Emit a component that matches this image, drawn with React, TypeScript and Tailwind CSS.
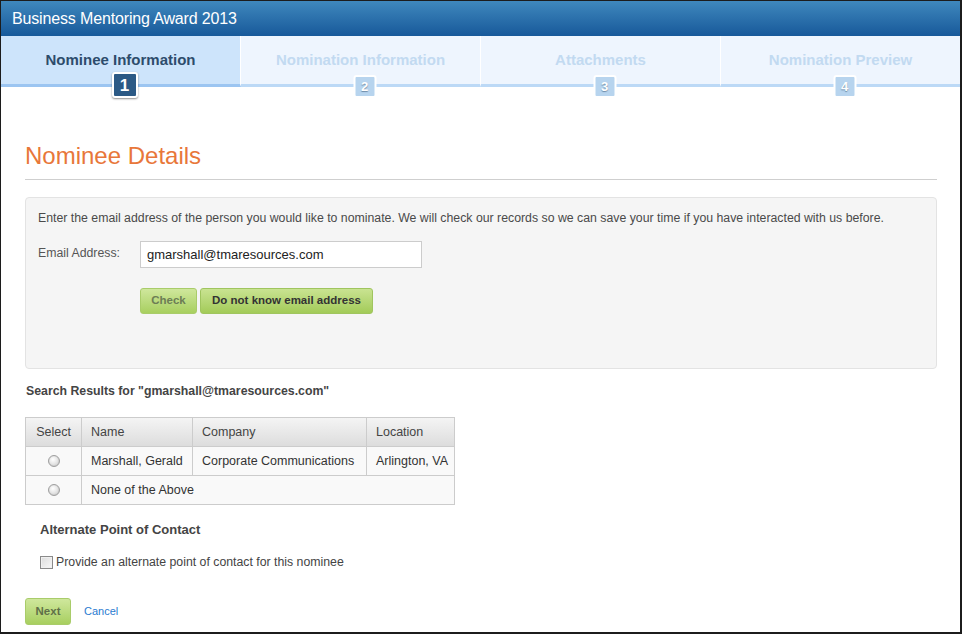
import React from "react";

const tabs = [
  { label: "Nominee Information", n: "1", active: true },
  { label: "Nomination Information", n: "2", active: false },
  { label: "Attachments", n: "3", active: false },
  { label: "Nomination Preview", n: "4", active: false },
];

function Radio() {
  return (
    <span className="inline-block w-[12px] h-[12px] rounded-full border border-[#a0a0a0] bg-[radial-gradient(circle_at_40%_35%,#ffffff_0%,#e8e8e8_45%,#c8c8c8_100%)] shadow-[inset_0_0_1px_rgba(0,0,0,0.2)]" />
  );
}

export default function App() {
  return (
    <div
      className="w-[962px] h-[634px] bg-white border-l border-t border-r-2 border-b-2 border-[#1c1c1c] overflow-hidden flex flex-col"
      style={{ fontFamily: '"Liberation Sans", Arial, sans-serif' }}
    >
      {/* Header */}
      <div className="h-[35px] shrink-0 bg-gradient-to-b from-[#3f88bd] to-[#17599a] flex items-center pl-[11px]">
        <span className="text-white text-[16px] tracking-[-0.15px]">Business Mentoring Award 2013</span>
      </div>

      {/* Tabs */}
      <div className="flex h-[51px] shrink-0">
        {tabs.map((t, i) => (
          <div
            key={t.n}
            className={`relative flex-1 flex justify-center pt-[15px] border-b-[3px] ${
              i < 3 ? "border-r border-r-white" : ""
            } ${t.active ? "bg-[#cde4fb] border-b-[#9cc5f1]" : "bg-[#eef5fe] border-b-[#bcd9f6]"}`}
          >
            <span
              className={`text-[15px] leading-[18px] font-bold ${
                t.active ? "text-[#2d4c6c]" : "text-[#c2daf1]"
              }`}
            >
              {t.label}
            </span>
            {t.active ? (
              <span className="absolute left-1/2 -translate-x-1/2 ml-[4px] bottom-[-14px] w-[26px] h-[26px] rounded-[3px] border-2 border-white bg-[#2b5985] shadow-[0_1px_2px_rgba(0,0,0,0.45)] flex items-center justify-center text-white font-bold text-[17px] leading-none z-10">
                {t.n}
              </span>
            ) : (
              <span className="absolute left-1/2 -translate-x-1/2 ml-[4px] bottom-[-14px] w-[23px] h-[23px] rounded-[3px] border-2 border-white bg-[#b7d4ee] flex items-center justify-center text-white font-bold text-[13px] leading-none z-10 [text-shadow:0_1px_1px_rgba(60,90,120,0.6)]">
                {t.n}
              </span>
            )}
          </div>
        ))}
      </div>

      {/* Content */}
      <div className="pl-[24px] pr-[23px] pt-[55px]">
        <h1 className="text-[24px] leading-[28px] text-[#e8773a] pb-[9px] border-b border-[#cfcfcf] font-normal">
          Nominee Details
        </h1>

        <div className="mt-[17px] bg-[#f5f5f5] border border-[#e3e3e3] rounded-[4px] pt-[12px] px-[12px] pb-[54px]">
          <p className="text-[12.3px] leading-[16px] text-[#4a4a4a]">
            Enter the email address of the person you would like to nominate. We will check our records so we can save your time if you have interacted with us before.
          </p>
          <div className="flex mt-[15px]">
            <label className="w-[102px] text-[12.3px] leading-[16px] text-[#555] pt-[4px]">Email Address:</label>
            <div className="w-[282px] h-[27px] bg-white border border-[#cccccc] flex items-center pl-[6px] text-[13px] text-[#222]">
              gmarshall@tmaresources.com
            </div>
          </div>
          <div className="flex ml-[102px] mt-[20px] gap-[3px]">
            <button className="w-[57px] h-[26px] rounded-[3px] border border-[#a9cc6a] bg-gradient-to-b from-[#cfe79c] to-[#a8cf5f] text-[11.5px] font-bold text-[#6c7d55]">
              Check
            </button>
            <button className="w-[173px] h-[26px] rounded-[3px] border border-[#a0c55f] bg-gradient-to-b from-[#c9e391] to-[#a3cb58] text-[11.5px] font-bold text-[#333]">
              Do not know email address
            </button>
          </div>
        </div>

        <div className="mt-[14px] text-[12.3px] leading-[16px] font-bold text-[#444] pl-[1px]">
          Search Results for "gmarshall@tmaresources.com"
        </div>

        <table className="mt-[18px] border-collapse text-[12.5px] text-[#333]">
          <thead>
            <tr className="h-[29px] bg-gradient-to-b from-[#f4f4f4] to-[#dcdcdc] text-[#444]">
              <th className="w-[56px] border border-[#cccccc] font-normal text-center">Select</th>
              <th className="w-[111px] border border-[#cccccc] font-normal text-left pl-[9px]">Name</th>
              <th className="w-[174px] border border-[#cccccc] font-normal text-left pl-[9px]">Company</th>
              <th className="w-[88px] border border-[#cccccc] font-normal text-left pl-[9px]">Location</th>
            </tr>
          </thead>
          <tbody>
            <tr className="h-[29px] bg-[#f9f9f9]">
              <td className="border border-[#cccccc] text-center pt-[5px]"><Radio /></td>
              <td className="border border-[#cccccc] pl-[9px]">Marshall, Gerald</td>
              <td className="border border-[#cccccc] pl-[9px]">Corporate Communications</td>
              <td className="border border-[#cccccc] pl-[9px]">Arlington, VA</td>
            </tr>
            <tr className="h-[29px] bg-[#f9f9f9]">
              <td className="border border-[#cccccc] text-center pt-[5px]"><Radio /></td>
              <td colSpan={3} className="border border-[#cccccc] pl-[9px]">None of the Above</td>
            </tr>
          </tbody>
        </table>

        <div className="mt-[16px] ml-[15px] text-[13px] leading-[18px] font-bold text-[#444]">
          Alternate Point of Contact
        </div>

        <div className="mt-[15px] ml-[15px] flex items-center gap-[3px]">
          <span className="w-[13px] h-[13px] border border-[#8a8a8a] bg-gradient-to-br from-[#dcdcdc] to-[#f8f8f8] shadow-[inset_0_0_0_1px_#f0f0f0]" />
          <span className="text-[12.3px] leading-[16px] text-[#444]">Provide an alternate point of contact for this nominee</span>
        </div>

        <div className="mt-[28px] flex items-center">
          <button className="w-[46px] h-[27px] rounded-[3px] border border-[#a9cc6a] bg-gradient-to-b from-[#cfe79c] to-[#a8cf5f] text-[11.5px] font-bold text-[#5f7048]">
            Next
          </button>
          <a className="ml-[13px] text-[11px] text-[#2a7bd0]">Cancel</a>
        </div>
      </div>
    </div>
  );
}
